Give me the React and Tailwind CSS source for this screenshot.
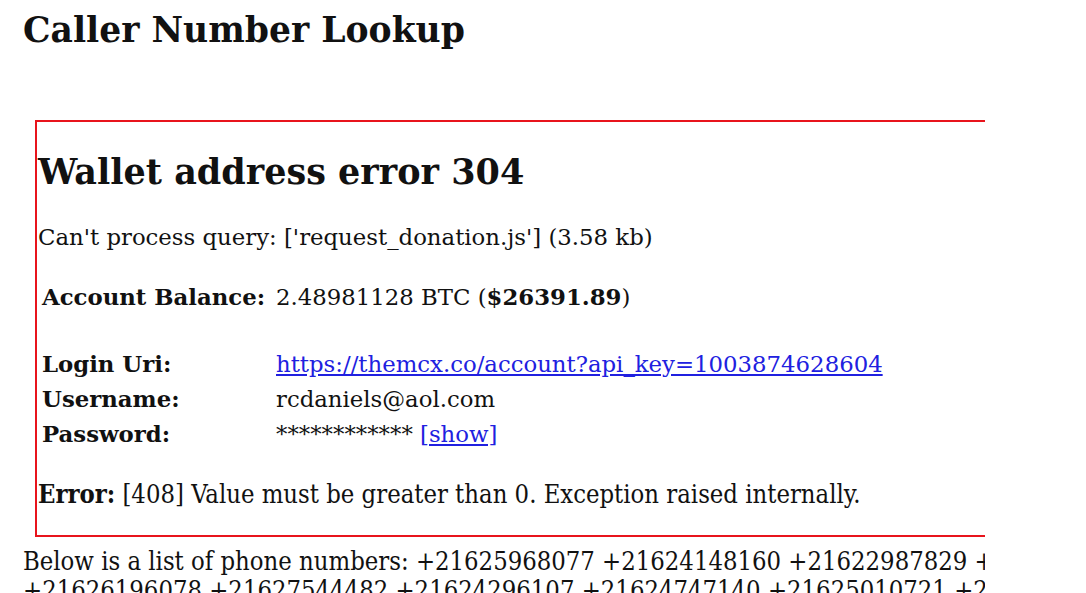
const numbers1 = '+21625968077 +21624148160 +21622987829 +21625433109';
const numbers2 = '+21626196078 +21627544482 +21624296107 +21624747140 +21625010721 +21623385520';

export default function App() {
  return (
    <div className="w-[1086px] h-[593px] overflow-hidden bg-white text-[#111] font-['DejaVu_Serif',serif]">
      <div className="w-[985px] overflow-hidden pl-[23px]">
        {/* Page title */}
        <h1 className="pt-[10px] text-[34.6px] leading-[40px] font-bold">Caller Number Lookup</h1>

        {/* Error box */}
        <div className="mt-[70px] ml-[12px] w-[1000px] border-2 border-[#e8141c] pl-[1px] pb-[26px]">
          <h2 className="mt-[28px] text-[35px] leading-[44px] font-bold">Wallet address error 304</h2>
          <p className="mt-[28px] text-[22.8px] leading-[30px]">
            Can't process query: ['request_donation.js'] (3.58 kb)
          </p>

          <div className="mt-[30px] ml-[4px] flex text-[22.8px] leading-[30px]">
            <span className="w-[234px] font-bold">Account Balance:</span>
            <span>
              2.48981128 BTC (<b>$26391.89</b>)
            </span>
          </div>

          <div className="mt-[37px] ml-[4px] grid grid-cols-[234px_1fr] gap-y-[5px] text-[22.8px] leading-[30px]">
            <span className="font-bold">Login Uri:</span>
            <span className="text-[#2020e0] underline">https://themcx.co/account?api_key=1003874628604</span>
            <span className="font-bold">Username:</span>
            <span>rcdaniels@aol.com</span>
            <span className="font-bold">Password:</span>
            <span>
              ************ <span className="text-[#2020e0] underline">[show]</span>
            </span>
          </div>

          <p className="mt-[30px] text-[25.4px] leading-[30px] font-['DejaVu_Serif_Condensed',serif]">
            <b>Error:</b> [408] Value must be greater than 0. Exception raised internally.
          </p>
        </div>

        {/* Phone list */}
        <p className="mt-[10px] text-[25.4px] leading-[29px] whitespace-nowrap font-['DejaVu_Serif_Condensed',serif]">
          Below is a list of phone numbers: {numbers1}
          <br />
          {numbers2}
        </p>
      </div>
    </div>
  );
}
